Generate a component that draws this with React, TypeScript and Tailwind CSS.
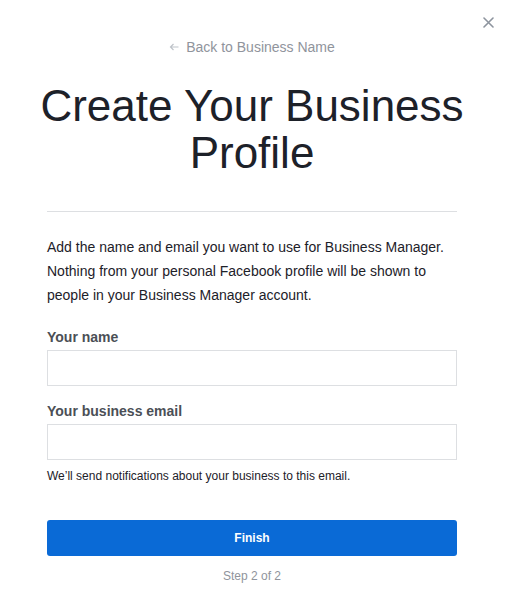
const font = { fontFamily: '"Liberation Sans", Arial, sans-serif' };

const Field = ({ label, top }: { label: string; top: string }) => (
  <div className={top}>
    <label className="block text-[14px] leading-[18px] font-bold text-[#4b4f56]">{label}</label>
    <input className="mt-[4px] block w-full h-[36px] border border-[#dddfe2] bg-white px-2 text-[14px] outline-none" />
  </div>
);

export default function App() {
  return (
    <div className="relative w-[512px] h-[597px] bg-white" style={font}>
      <button className="absolute right-[17px] top-[15px] w-[14px] h-[14px] flex items-center justify-center">
        <svg width="11" height="11" viewBox="0 0 11 11" stroke="#8d949e" strokeWidth="1.6" strokeLinecap="round">
          <path d="M1 1l9 9M10 1l-9 9" />
        </svg>
      </button>

      <div className="pl-[47px] pr-[55px] pt-[39px]">
        <div className="flex items-center justify-center gap-[7px] text-[14px] leading-[16px] text-[#90949c]">
          <svg width="10" height="8" viewBox="0 0 10 8" fill="none" stroke="#bec3c9" strokeWidth="1.2">
            <path d="M9.5 4H1.5M4.5 1L1.5 4l3 3" />
          </svg>
          <span>Back to Business Name</span>
        </div>

        <h1 className="-mx-[12px] mt-[27px] text-center text-[44px] leading-[47px] font-normal text-[#1d2129] whitespace-nowrap">
          Create Your Business
          <br />
          Profile
        </h1>

        <div className="mt-[35px] h-px bg-[#dddfe2]" />

        <p className="mt-[23px] text-[14px] leading-[24px] text-[#1d2129]">
          Add the name and email you want to use for Business Manager. Nothing from your personal Facebook profile will be shown to people in your Business Manager account.
        </p>

        <Field label="Your name" top="mt-[21px]" />
        <Field label="Your business email" top="mt-[16px]" />

        <p className="mt-[8px] text-[12px] leading-[16px] text-[#1d2129]">
          We’ll send notifications about your business to this email.
        </p>

        <button className="mt-[36px] w-full h-[36px] rounded-[3px] bg-[#0a6ad6] text-white text-[12px] font-bold">
          Finish
        </button>

        <div className="mt-[12px] text-center text-[12px] leading-[16px] text-[#90949c]">Step 2 of 2</div>
      </div>
    </div>
  );
}
